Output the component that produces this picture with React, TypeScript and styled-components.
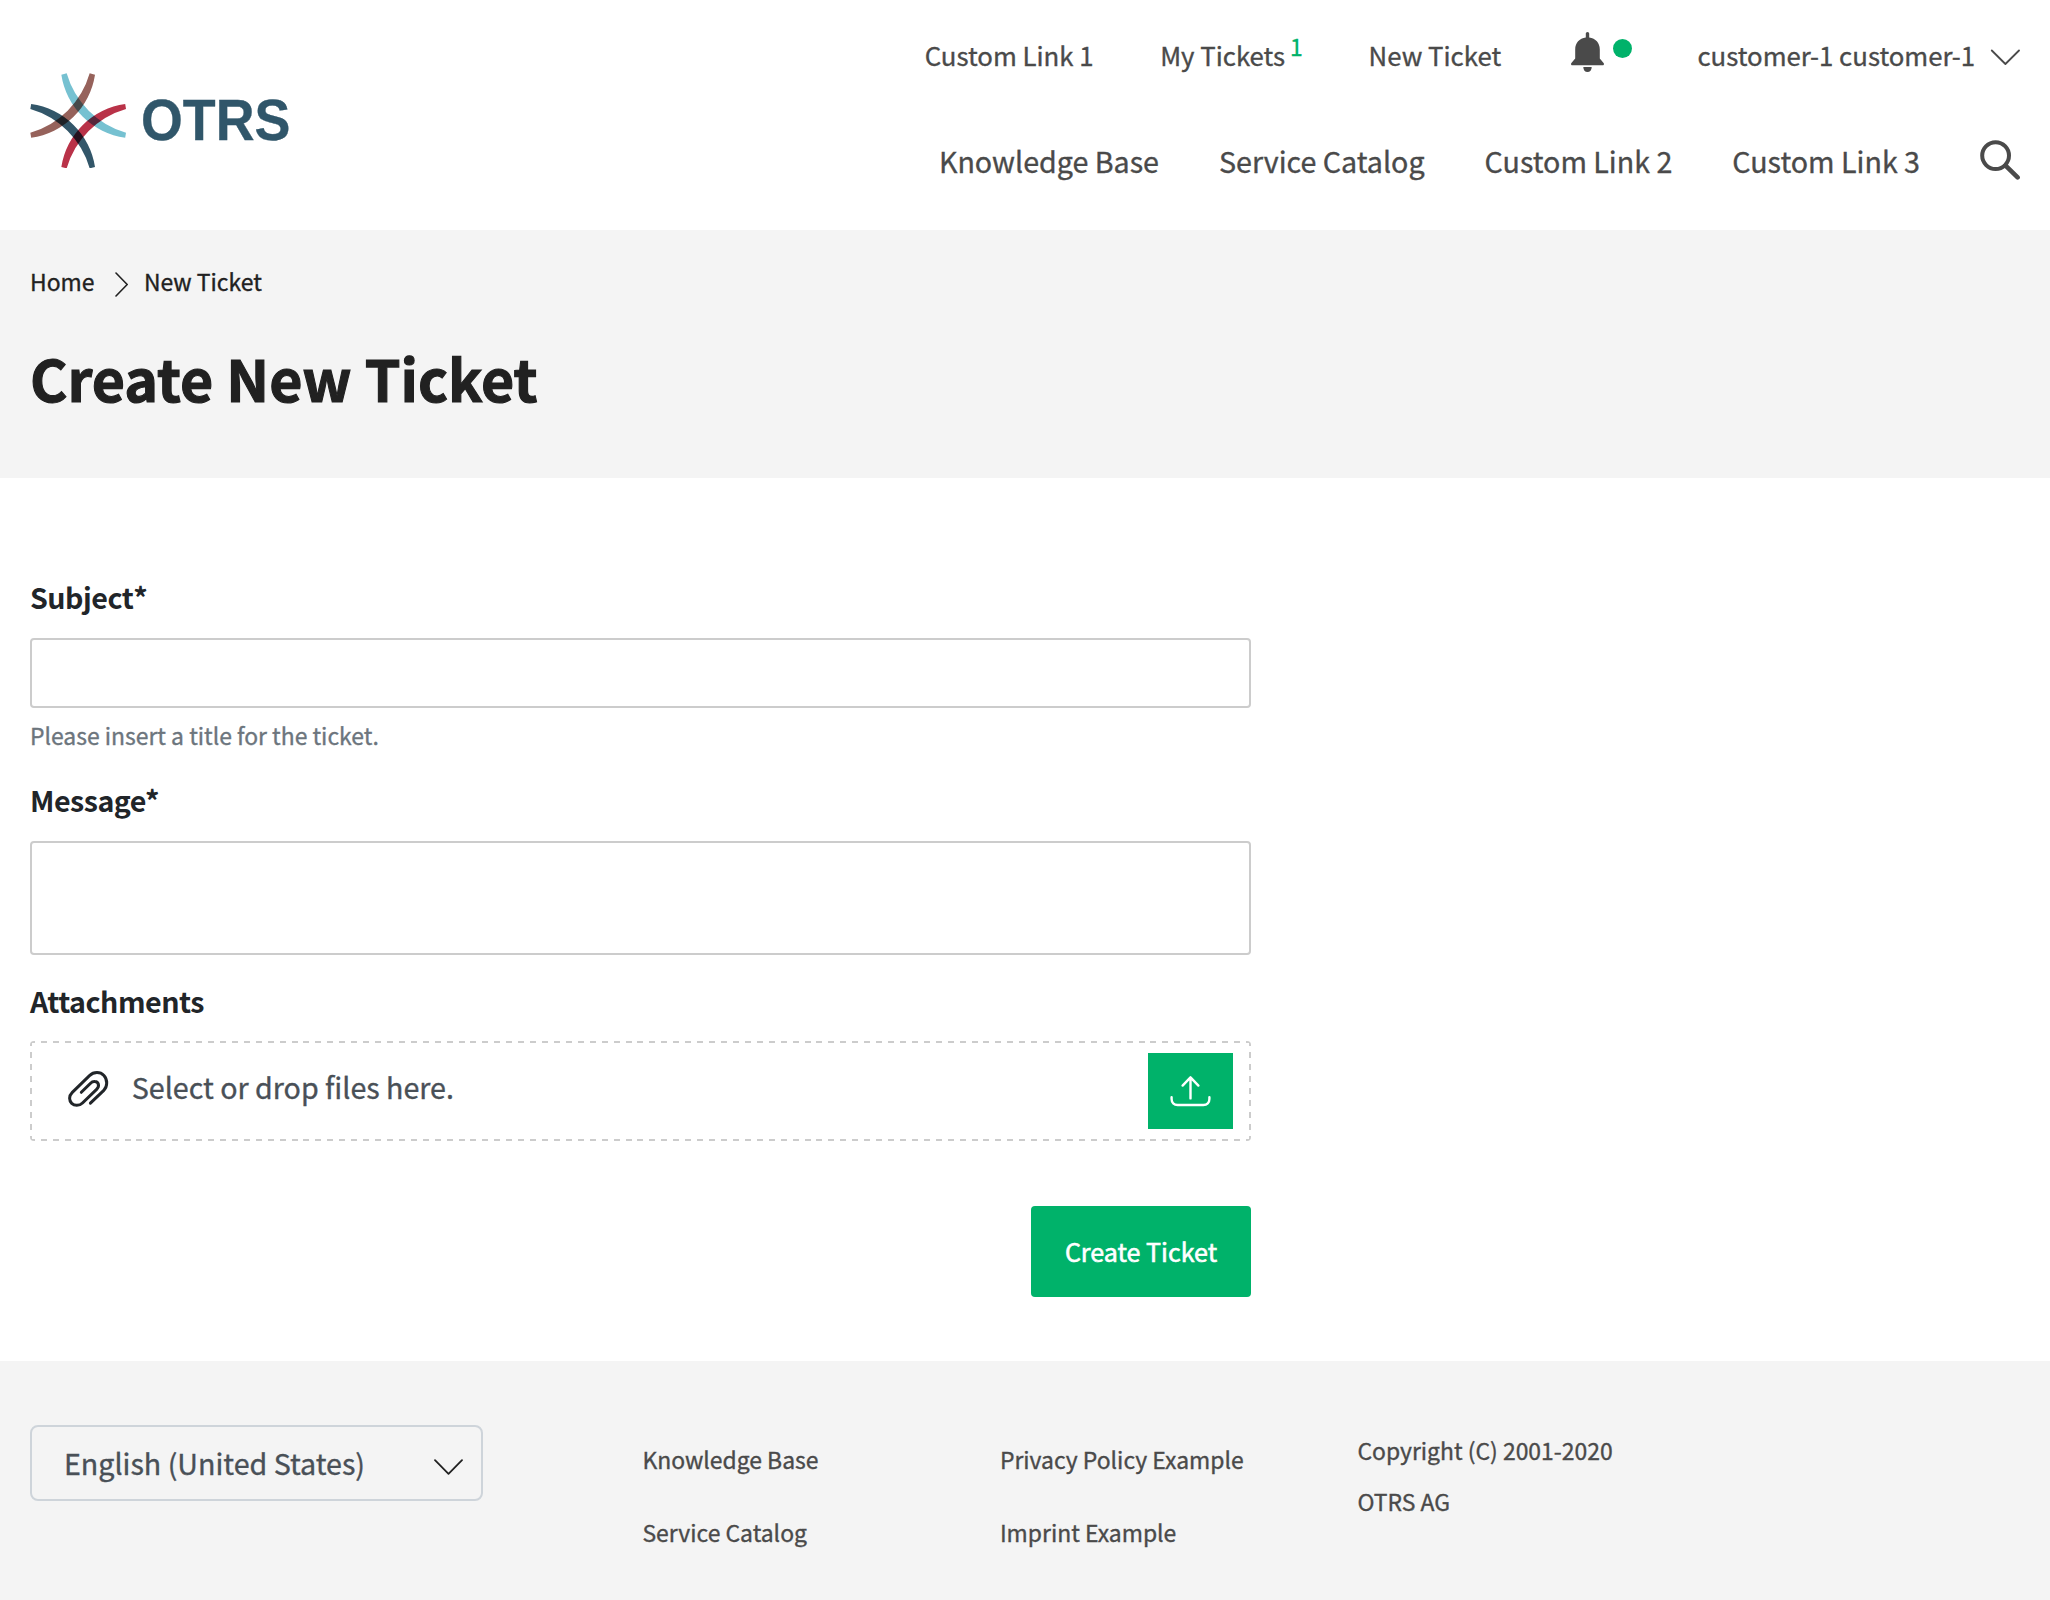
import React from "react";
import styled, { createGlobalStyle } from "styled-components";

const GREEN = "#00b26a";
const GREY = "#4a4a4a";
const INK = "#212529";
const BAND = "#f4f4f4";
const LINE = "#cccccc";

const Global = createGlobalStyle`
  *, *::before, *::after { box-sizing: border-box; }
  html, body { margin: 0; padding: 0; background: #fff; }
  body {
    font-family: "Noto Sans CJK SC", "Noto Sans", sans-serif;
    font-size: 28.64px;
    color: ${INK};
    -webkit-text-stroke: 0.35px currentColor;
  }
  a { color: inherit; text-decoration: none; }
  button, input, textarea { font: inherit; }
  svg { display: block; flex: none; }
`;

const Page = styled.div`
  display: flex;
  flex-direction: column;
  min-height: 1600px;
  white-space: nowrap;
`;

/* ---------- header ---------- */

const Header = styled.header`
  display: flex;
  justify-content: space-between;
  height: 230px;
  padding: 0 30px;
  color: ${GREY};
`;

const Logo = styled.a`
  display: flex;
  align-items: center;
  height: 241px;
`;

const LogoText = styled.span`
  margin: 0 0 1px 14.3px;
  font: 700 57px/60px "Liberation Sans", Arial, sans-serif;
  color: #30566a;
  transform: scaleX(0.943);
  transform-origin: left center;
`;

const Strand = styled.path`
  mix-blend-mode: multiply;
`;

const LogoMark = styled.svg`
  isolation: isolate;
`;

const Navs = styled.div`
  display: flex;
  flex-direction: column;
  align-items: flex-end;
`;

const TopNav = styled.nav`
  display: flex;
  align-items: center;
  height: 40px;
  margin-top: 35px;
  font-size: 25.78px;
  line-height: 40px;
`;

const TopLink = styled.a<{ $gap: number }>`
  display: flex;
  margin-right: ${(p) => p.$gap}px;
`;

const Count = styled.span`
  margin-left: 5px;
  font-size: 22.91px;
  line-height: 22px;
  color: ${GREEN};
`;

const Bell = styled.a`
  display: flex;
  align-items: flex-start;
  margin-right: 65.3px;
  padding-bottom: 6px;
`;

const Dot = styled.span`
  width: 19px;
  height: 19px;
  margin: 6.5px 0 0 9.5px;
  border-radius: 50%;
  background: ${GREEN};
`;

const Account = styled.a`
  display: flex;
  align-items: center;
  gap: 15px;
`;

const AccountArrow = styled.svg`
  margin-top: 3px;
`;

const MainNav = styled.nav`
  display: flex;
  align-items: center;
  gap: 60px;
  height: 44px;
  margin-top: 63.5px;
  line-height: 44px;
`;

const Search = styled.svg`
  margin-bottom: 1.6px;
`;

/* ---------- title band ---------- */

const TitleBand = styled.section`
  height: 248px;
  padding: 31px 30px 0;
  background: ${BAND};
  color: #212121;
`;

const Crumbs = styled.div`
  display: flex;
  align-items: center;
  height: 40px;
  font-size: 22.91px;
  line-height: 40px;
`;

const CrumbArrow = styled.svg`
  margin: 7px 15.5px 0 21px;
`;

const Title = styled.h1`
  margin: 36px 0 0;
  font-size: 57.28px;
  line-height: 80px;
  font-weight: 700;
  -webkit-text-stroke-width: 1.1px;
`;

/* ---------- form ---------- */

const Form = styled.form`
  display: flex;
  flex-direction: column;
  width: 1251px;
  padding: 97px 0 64px 30px;
`;

const Label = styled.label<{ $top?: number }>`
  height: 43px;
  margin-top: ${(p) => p.$top ?? 0}px;
  line-height: 43px;
  font-weight: 700;
  letter-spacing: -0.5px;
  -webkit-text-stroke-width: 0;
`;

const Input = styled.input`
  height: 70px;
  margin-top: 20px;
  padding: 0 24px;
  border: 2px solid ${LINE};
  border-radius: 4px;
  background: #fff;
  outline: none;
`;

const TextArea = styled.textarea`
  height: 114px;
  margin: 20px 0 0;
  padding: 16px 24px;
  border: 2px solid ${LINE};
  border-radius: 4px;
  background: #fff;
  outline: none;
  resize: none;
`;

const Help = styled.small`
  margin-top: 10px;
  font-size: 22.91px;
  line-height: 34px;
  color: #6c757d;
`;

const dashesX = `repeating-linear-gradient(90deg, ${LINE} 0 5.07px, transparent 5.07px 11px, ${LINE} 11px 11.93px)`;
const dashesY = `repeating-linear-gradient(180deg, ${LINE} 0 5px, transparent 5px 11px, ${LINE} 11px 12px)`;

const DropZone = styled.div`
  display: flex;
  align-items: center;
  height: 100px;
  margin-top: 19px;
  padding: 0 18px 0 37.5px;
  border-radius: 4px;
  background:
    ${dashesX} top / 100% 2px no-repeat,
    ${dashesX} bottom / 100% 2px no-repeat,
    ${dashesY} left / 2px 100% no-repeat,
    ${dashesY} right / 2px 100% no-repeat;
`;

const Clip = styled.svg`
  margin-bottom: 4px;
`;

const DropText = styled.span`
  flex: 1;
  padding: 0 0 8px 23.3px;
  line-height: 42px;
  color: #495057;
`;

const Upload = styled.button`
  display: flex;
  align-items: center;
  justify-content: center;
  width: 85px;
  height: 76px;
  padding: 0;
  border: 0;
  background: ${GREEN};
`;

const Submit = styled.button`
  align-self: flex-end;
  width: 220px;
  height: 91px;
  margin-top: 65px;
  padding: 0 0 2px;
  border: 0;
  border-radius: 4px;
  background: ${GREEN};
  color: #fff;
  font-size: 25.06px;
  line-height: 40px;
  -webkit-text-stroke-width: 0.6px;
`;

/* ---------- footer ---------- */

const Footer = styled.footer`
  display: grid;
  grid-template-columns: 612.4px 357.5px 357.5px auto;
  align-items: start;
  flex: 1;
  padding: 0 30px;
  background: ${BAND};
  color: ${GREY};
  font-size: 22.91px;
`;

const Language = styled.div`
  display: flex;
  align-items: center;
  justify-content: space-between;
  width: 453px;
  height: 76px;
  margin-top: 64px;
  padding: 0 18px 0 32px;
  border: 2px solid #ced4da;
  border-radius: 8px;
  font-size: 28.64px;
  line-height: 42px;
  color: #495057;
`;

const LanguageArrow = styled.svg`
  margin-top: 8px;
`;

const Links = styled.div`
  display: flex;
  flex-direction: column;
  margin-top: 61.5px;
  line-height: 73px;
`;

const Copyright = styled.div`
  display: flex;
  flex-direction: column;
  margin-top: 63.5px;
  line-height: 51px;
`;

/* One tapered strand of the logo, running from the top to the right. */
const STRAND =
  "M184 73A225 225 0 0 0 375.5 262L378 247A260 260 0 0 1 200 69Z";
const FLIP_X = "translate(469 0) scale(-1 1)";
const FLIP_Y = "translate(0 423) scale(1 -1)";
const FLIP_BOTH = "translate(469 423) scale(-1 -1)";

export default function App() {
  return (
    <>
      <Global />
      <Page>
        <Header>
          <Logo href="#">
            <LogoMark width="96.7" height="95.7" viewBox="90 68 290 287">
              <Strand d={STRAND} fill="#76c1d1" />
              <Strand d={STRAND} fill="#96625b" transform={FLIP_X} />
              <Strand d={STRAND} fill="#b93248" transform={FLIP_Y} />
              <Strand d={STRAND} fill="#325669" transform={FLIP_BOTH} />
            </LogoMark>
            <LogoText>OTRS</LogoText>
          </Logo>
          <Navs>
            <TopNav>
              <TopLink href="#" $gap={66.5}>Custom Link 1</TopLink>
              <TopLink href="#" $gap={65.8}>
                My Tickets<Count>1</Count>
              </TopLink>
              <TopLink href="#" $gap={69.5}>New Ticket</TopLink>
              <Bell href="#">
                <svg width="33" height="40" viewBox="0 0 33 40" fill={GREY}>
                  <path d="M16.5 0c1 0 1.7.8 1.7 1.8V5.4C24.6 6.2 28.8 10.8 28.8 17.4V26.6L32.6 31c.8 1 .2 2.3-.9 2.3H1.3C.2 33.3-.4 32 .4 31L4.2 26.6V17.4C4.2 10.8 8.4 6.2 14.8 5.4V1.8C14.8.8 15.5 0 16.5 0Z" />
                  <path d="M12.3 35H20.7C20.7 38 19 40 16.5 40S12.3 38 12.3 35Z" />
                </svg>
                <Dot />
              </Bell>
              <Account href="#">
                customer-1 customer-1
                <AccountArrow width="30" height="16" viewBox="0 0 30 16" fill="none" stroke={GREY} strokeWidth="1.8" strokeLinecap="round" strokeLinejoin="round">
                  <path d="M1.8 1.5L15.4 15L29 1.5" />
                </AccountArrow>
              </Account>
            </TopNav>
            <MainNav>
              <a href="#">Knowledge Base</a>
              <a href="#">Service Catalog</a>
              <a href="#">Custom Link 2</a>
              <a href="#">Custom Link 3</a>
              <Search width="40" height="40" viewBox="0 0 40 40" fill="none" stroke={GREY} strokeLinecap="round">
                <circle cx="15.6" cy="15.6" r="13.4" strokeWidth="4" />
                <path d="M25.6 25.6L37.6 37.4" strokeWidth="4.6" />
              </Search>
            </MainNav>
          </Navs>
        </Header>

        <TitleBand>
          <Crumbs>
            <a href="#">Home</a>
            <CrumbArrow width="13" height="25" viewBox="0 0 13 25" fill="none" stroke="#212121" strokeWidth="1.6" strokeLinecap="round" strokeLinejoin="round">
              <path d="M1 1L12.2 12.5L1 24" />
            </CrumbArrow>
            <a href="#">New Ticket</a>
          </Crumbs>
          <Title>Create New Ticket</Title>
        </TitleBand>

        <Form>
          <Label htmlFor="subject">Subject*</Label>
          <Input id="subject" />
          <Help>Please insert a title for the ticket.</Help>
          <Label htmlFor="message" $top={26}>Message*</Label>
          <TextArea id="message" />
          <Label $top={24}>Attachments</Label>
          <DropZone>
            <Clip width="41" height="36" viewBox="0 0 41 36" fill="none" stroke={INK} strokeWidth="3" strokeLinecap="round" strokeLinejoin="round">
              <path d="M22.4 32.2L35.8 19.3C37.6 17.5 38.7 15 38.7 12C38.7 6 34.5 1.6 29 1.6C26 1.6 23.5 2.7 21.5 4.6L4.3 21.3C2.4 23.2 1.6 25.3 1.6 27.3C1.6 31.3 4.8 34.3 8.8 34.3C11 34.3 13 33.5 14.5 32L28.6 18.3C32 15 30.5 10.7 26.8 10.6C25 10.5 23.5 11.3 22.3 12.5L13.3 21.3" />
            </Clip>
            <DropText>Select or drop files here.</DropText>
            <Upload type="button" aria-label="Upload">
              <svg width="41" height="32" viewBox="0 0 41 32" fill="none" stroke="#fff" strokeWidth="2.4" strokeLinecap="round" strokeLinejoin="round">
                <path d="M12.6 10.6L20.5 2.4L28.4 10.6M20.5 2.4V23.4M1.6 22.3V24C1.6 27.6 4 30 7.6 30H33.4C37 30 39.4 27.6 39.4 24V22.3" />
              </svg>
            </Upload>
          </DropZone>
          <Submit type="button">Create Ticket</Submit>
        </Form>

        <Footer>
          <Language>
            English (United States)
            <LanguageArrow width="29" height="16" viewBox="0 0 29 16" fill="none" stroke="#212121" strokeWidth="1.8" strokeLinecap="round" strokeLinejoin="round">
              <path d="M1 1.2L14.5 14.8L28 1.2" />
            </LanguageArrow>
          </Language>
          <Links>
            <a href="#">Knowledge Base</a>
            <a href="#">Service Catalog</a>
          </Links>
          <Links>
            <a href="#">Privacy Policy Example</a>
            <a href="#">Imprint Example</a>
          </Links>
          <Copyright>
            <span>Copyright (C) 2001-2020</span>
            <span>OTRS AG</span>
          </Copyright>
        </Footer>
      </Page>
    </>
  );
}
